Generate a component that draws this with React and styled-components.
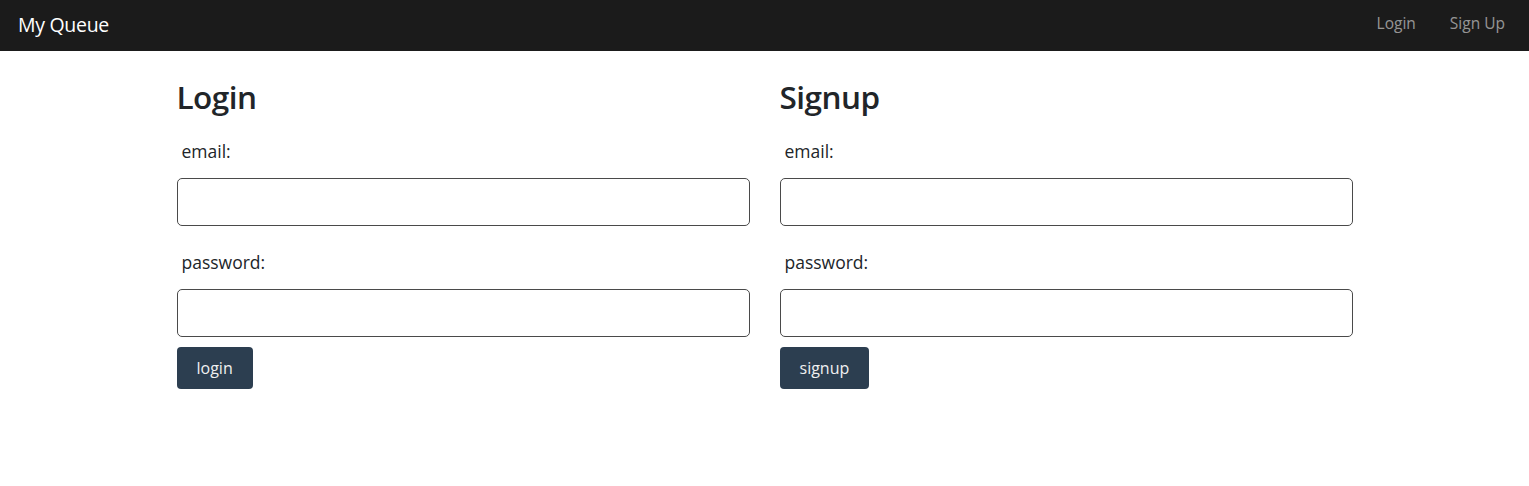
import styled, { createGlobalStyle } from "styled-components";

const GlobalStyle = createGlobalStyle`
  body {
    margin: 0;
    font-family: "Open Sans", "Noto Sans", sans-serif;
    color: #212529;
    background: #fff;
  }
  * { box-sizing: border-box; }
`;

const Navbar = styled.nav`
  height: 51px;
  background-color: #1b1b1b;
  display: flex;
  align-items: center;
  justify-content: space-between;
  padding: 0 24px 3px 18px;
`;

const Brand = styled.a`
  color: #fff;
  font-size: 19.5px;
  text-decoration: none;
  letter-spacing: -0.3px;
`;

const NavLinks = styled.div`
  display: flex;
  gap: 34px;
  padding-bottom: 2px;
`;

const NavLink = styled.a`
  color: rgba(255, 255, 255, 0.55);
  font-size: 15.5px;
  text-decoration: none;
  cursor: pointer;
`;

const Container = styled.main`
  max-width: 1176px;
  margin: 0 auto;
  padding-top: 27px;
  display: grid;
  grid-template-columns: 1fr 1fr;
  gap: 30px;
`;

const Form = styled.form`
  display: flex;
  flex-direction: column;
`;

const Title = styled.h2`
  margin: 0 0 23px;
  font-size: 31.5px;
  font-weight: 600;
  line-height: 1.2;
  letter-spacing: -0.5px;
`;

const Label = styled.label`
  font-size: 17.5px;
  line-height: 24px;
  padding-left: 5px;
  margin-bottom: 15px;
`;

const Input = styled.input`
  height: 48px;
  border: 1px solid #4a4a4a;
  border-radius: 5px;
  padding: 6px 12px;
  font-size: 16px;
  margin-bottom: ${(p) => p.after || 24}px;
`;

const Button = styled.button`
  align-self: flex-start;
  height: 42px;
  padding: 0 20px;
  border: none;
  border-radius: 4px;
  background-color: #2c3e50;
  color: #f0f0f0;
  font-family: inherit;
  font-size: 16px;
  cursor: pointer;
`;

const AuthForm = ({ title, action }) => (
  <Form onSubmit={(e) => e.preventDefault()}>
    <Title>{title}</Title>
    <Label>email:</Label>
    <Input type="email" />
    <Label>password:</Label>
    <Input type="password" after={10} />
    <Button type="submit">{action}</Button>
  </Form>
);

const App = () => {
  return (
    <>
      <GlobalStyle />
      <Navbar>
        <Brand href="#">My Queue</Brand>
        <NavLinks>
          <NavLink>Login</NavLink>
          <NavLink>Sign Up</NavLink>
        </NavLinks>
      </Navbar>
      <Container>
        <AuthForm title="Login" action="login" />
        <AuthForm title="Signup" action="signup" />
      </Container>
    </>
  );
};

export default App;
